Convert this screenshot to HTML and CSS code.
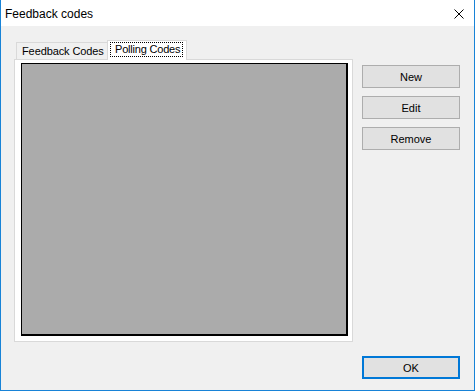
FILE: index.html
```html
<!DOCTYPE html>
<html lang="en">
<head>
    <meta charset="UTF-8">
    <title>Feedback codes</title>
    <link rel="stylesheet" href="styles.css">
</head>
<body>

<div class="window">
    <div class="title-bar">
        <span class="title">Feedback codes</span>
        <svg class="close" width="10" height="10" viewBox="0 0 10 10">
            <path d="M0.5 0.5 L9.5 9.5 M9.5 0.5 L0.5 9.5" stroke="#000" stroke-width="1" fill="none"/>
        </svg>
    </div>

    <div class="content">
        <div class="main">
            <div class="tab-control">
                <div class="tabs">
                    <div class="tab">Feedback Codes</div>
                    <div class="tab selected"><span class="focus">Polling Codes</span></div>
                </div>
                <div class="tab-page">
                    <div class="list"></div>
                </div>
            </div>

            <div class="side-buttons">
                <button class="button">New</button>
                <button class="button">Edit</button>
                <button class="button">Remove</button>
            </div>
        </div>

        <div class="footer">
            <button class="button default">OK</button>
        </div>
    </div>
</div>

</body>
</html>
```

FILE: styles.css
```css
body {
    margin: 0;
    padding: 0;
    font-family: 'Liberation Sans', Arial, sans-serif;
    font-size: 11px;
    color: #000;
}

.window {
    width: 475px;
    height: 391px;
    box-sizing: border-box;
    border: 1px solid #1883d7;
    border-top: none;
    background-color: #f0f0f0;
    display: flex;
    flex-direction: column;
}

.title-bar {
    height: 26px;
    background-color: #fff;
    display: flex;
    align-items: center;
    justify-content: space-between;
    padding: 0 10px 0 4px;
}

.title {
    font-size: 12px;
    margin-top: 1px;
}

.close {
    display: block;
    margin-top: 1px;
}

.content {
    flex: 1;
    display: flex;
    flex-direction: column;
    padding: 14px 14px 0 13px;
}

.main {
    display: flex;
    gap: 9px;
}

.tab-control {
    width: 339px;
}

.tabs {
    display: flex;
    align-items: flex-end;
    height: 19px;
    padding-left: 2px;
    position: relative;
    z-index: 1;
}

.tab {
    width: 92px;
    height: 17px;
    box-sizing: border-box;
    border: 1px solid #d9d9d9;
    border-bottom: none;
    padding: 2px 0 0 5px;
    background-color: #f0f0f0;
    white-space: nowrap;
    letter-spacing: -0.1px;
}

.tab.selected {
    width: 80px;
    height: 20px;
    margin-left: -1px;
    margin-bottom: -1px;
    background-color: #fff;
    padding: 1px 0 0 2px;
    letter-spacing: -0.2px;
}

.focus {
    display: inline-block;
    width: 73px;
    box-sizing: border-box;
    border: 1px dotted #000;
    padding: 0 0 1px 4px;
}

.tab-page {
    height: 283px;
    box-sizing: border-box;
    border: 1px solid #d9d9d9;
    background-color: #fff;
    padding: 3px 4px 5px 6px;
}

.list {
    height: 100%;
    box-sizing: border-box;
    background-color: #ababab;
    border: 1px solid #000;
    border-right-width: 2px;
    border-bottom-width: 2px;
}

.side-buttons {
    display: flex;
    flex-direction: column;
    gap: 8px;
    padding-top: 25px;
}

.button {
    width: 98px;
    height: 23px;
    box-sizing: border-box;
    font-family: 'Liberation Sans', Arial, sans-serif;
    font-size: 11px;
    color: #000;
    background-color: #e1e1e1;
    border: 1px solid #adadad;
    padding: 0;
}

.button.default {
    border: 2px solid #0078d7;
}

.footer {
    display: flex;
    justify-content: flex-end;
    padding-top: 14px;
}
```
